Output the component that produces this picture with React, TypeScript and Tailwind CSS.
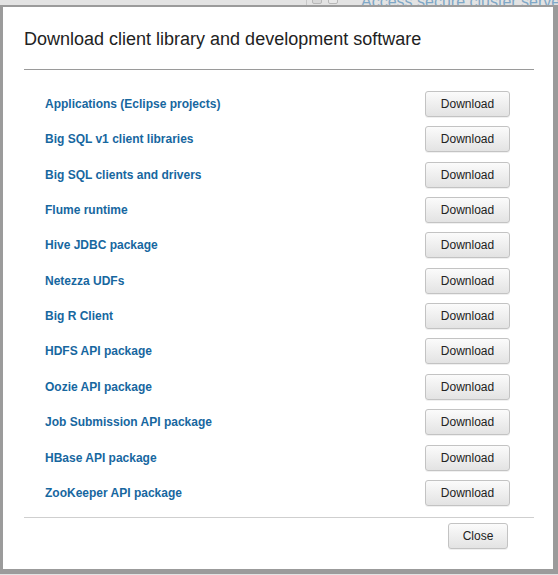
import React from "react";

const items = [
  "Applications (Eclipse projects)",
  "Big SQL v1 client libraries",
  "Big SQL clients and drivers",
  "Flume runtime",
  "Hive JDBC package",
  "Netezza UDFs",
  "Big R Client",
  "HDFS API package",
  "Oozie API package",
  "Job Submission API package",
  "HBase API package",
  "ZooKeeper API package",
];

const btn =
  "h-[26px] rounded-[3px] border border-[#c3c3c3] bg-gradient-to-b from-[#fbfbfb] to-[#e3e3e3] text-[12px] text-[#222] leading-none shadow-[0_1px_0_rgba(0,0,0,0.06)]";

export default function App() {
  return (
    <div
      className="relative h-[575px] w-[558px] overflow-hidden bg-[#e3e3e3]"
      style={{ fontFamily: '"Liberation Sans", Arial, sans-serif' }}
    >
      <div className="absolute left-[306px] top-0 h-[6px] w-px bg-[#c8c8c8]" />
      <div className="absolute left-[312px] top-[-6px] h-[10px] w-[10px] rounded-[2px] border border-[#b8b8b8] bg-[#d8d8d8]" />
      <div className="absolute left-[328px] top-[-6px] h-[10px] w-[10px] rounded-[2px] border border-[#b8b8b8] bg-[#e8e8e8]" />
      <div className="absolute left-[361px] top-[-10px] whitespace-nowrap text-[16px] text-[#7fa7c6]">
        Access secure cluster servers
      </div>
      <div className="absolute left-[361px] top-[571px] whitespace-nowrap text-[16px] text-[#7fa7c6]">
        Add and manage your data
      </div>

      <div className="absolute left-0 top-[5px] flex h-[569px] w-[558px] flex-col border-b-[5px] border-l-[3px] border-r-[5px] border-t-[2px] border-[#9b9b9b] bg-white">
        <div className="ml-[21px] mr-[19px] border-b border-[#9a9a9a] pb-[18px] pt-[20px]">
          <h1 className="text-[18px] font-normal leading-[24px] text-[#222]">
            Download client library and development software
          </h1>
        </div>
        <div className="ml-[21px] mr-[19px] pb-[6px] pt-[16.3px]">
          {items.map((label) => (
            <div
              key={label}
              className="flex h-[35.36px] items-center justify-between pl-[21px] pr-[24px]"
            >
              <span className="text-[12px] font-bold text-[#17679f]">{label}</span>
              <button className={`${btn} w-[85px]`}>Download</button>
            </div>
          ))}
        </div>
        <div className="ml-[21px] mr-[19px] flex justify-end border-t border-[#cfcfcf] pr-[26px] pt-[5px]">
          <button className={`${btn} w-[60px]`}>Close</button>
        </div>
      </div>
    </div>
  );
}
